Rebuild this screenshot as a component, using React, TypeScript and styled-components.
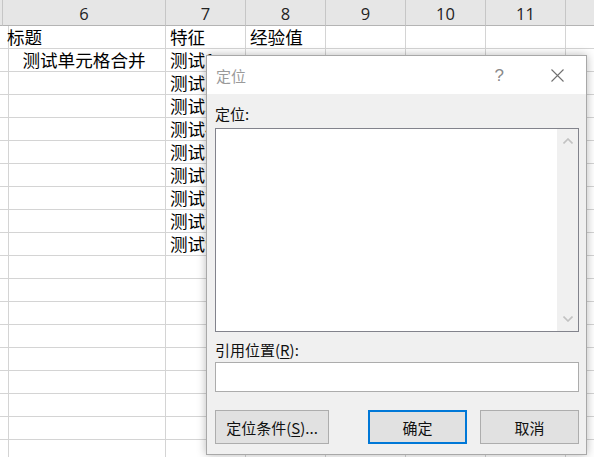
import React from "react";
import styled, { createGlobalStyle } from "styled-components";

const Global = createGlobalStyle`
  html, body { margin: 0; padding: 0; background: #fff; overflow: hidden; }
  body { font-family: "Noto Sans CJK SC", "Noto Sans", sans-serif; }
`;

const Page = styled.div`
  position: relative;
  width: 594px;
  height: 457px;
  overflow: hidden;
  background: #fff;
`;

const Sheet = styled.div`
  display: grid;
  grid-template-columns: 3px 163px 80px 80px 80px 80px 80px 40px;
  grid-auto-rows: 23px;
  grid-template-rows: 26px;
`;

const HeadCell = styled.div`
  box-sizing: border-box;
  background: #e6e6e6;
  border-right: 1px solid #c6c6c6;
  border-bottom: 1px solid #b4b4b4;
  display: flex;
  align-items: center;
  justify-content: center;
  font-family: "Open Sans", "Noto Sans", sans-serif;
  font-size: 16.5px;
  color: #222;
  padding-top: 1px;
`;

const Cell = styled.div<{ $align?: "left" | "center" | "right" }>`
  box-sizing: border-box;
  border-right: 1px solid #d4d4d4;
  border-bottom: 1px solid #d4d4d4;
  display: flex;
  align-items: center;
  justify-content: ${(p) =>
    p.$align === "center" ? "center" : p.$align === "right" ? "flex-end" : "flex-start"};
  padding: 0 4px;
  font-size: 17.6px;
  color: #000;
  white-space: nowrap;
  overflow: visible;
  line-height: 1;
`;

const Dialog = styled.div`
  position: absolute;
  left: 206px;
  top: 55px;
  width: 381px;
  height: 400px;
  box-sizing: border-box;
  border: 1px solid #a8a8a8;
  background: #f0f0f0;
  box-shadow: 0 0 9px rgba(0, 0, 0, 0.28);
  display: flex;
  flex-direction: column;
`;

const TitleBar = styled.div`
  height: 38px;
  background: #fff;
  display: flex;
  align-items: center;
  padding-left: 9px;
  padding-right: 22px;
`;

const Title = styled.div`
  flex: 1;
  font-size: 15px;
  color: #9a9a9a;
  padding-top: 1px;
`;

const Help = styled.div`
  font-family: "Liberation Sans", sans-serif;
  font-size: 17px;
  color: #8a8a8a;
  margin-right: 47px;
  padding-top: 2px;
`;

const Body = styled.div`
  flex: 1;
  display: flex;
  flex-direction: column;
  padding: 10px 7px 0 8px;
`;

const Label = styled.div<{ $mt?: number }>`
  font-size: 15px;
  line-height: 20px;
  height: 20px;
  color: #111;
  margin-top: ${(p) => p.$mt ?? 0}px;
  u { text-decoration: underline; text-underline-offset: 2px; }
`;

const ListBox = styled.div`
  margin-top: 4px;
  height: 204px;
  box-sizing: border-box;
  border: 1px solid #82838c;
  background: #fff;
  display: flex;
`;

const ListArea = styled.div`
  flex: 1;
`;

const ScrollBar = styled.div`
  width: 21px;
  background: #f0f0f0;
  display: flex;
  flex-direction: column;
  justify-content: space-between;
  align-items: center;
  padding: 9px 0 9px;
`;

const Input = styled.div`
  margin-top: 2px;
  height: 30px;
  box-sizing: border-box;
  border: 1px solid #acacac;
  background: #fff;
`;

const ButtonRow = styled.div`
  margin-top: 18px;
  display: flex;
  align-items: center;
  gap: 13px;
`;

const Button = styled.div<{ $w: number; $primary?: boolean; $push?: boolean }>`
  width: ${(p) => p.$w}px;
  height: 34px;
  box-sizing: border-box;
  border: ${(p) => (p.$primary ? "2px solid #0078d7" : "1px solid #adadad")};
  background: #e1e1e1;
  display: flex;
  align-items: center;
  justify-content: center;
  font-size: 15px;
  color: #111;
  margin-left: ${(p) => (p.$push ? "auto" : "0")};
  u { text-decoration: underline; text-underline-offset: 2px; }
`;

const Chevron = ({ up }: { up?: boolean }) => (
  <svg width="10" height="6" viewBox="0 0 10 6">
    <polyline
      points={up ? "0.5,5.5 5,1 9.5,5.5" : "0.5,0.5 5,5 9.5,0.5"}
      fill="none"
      stroke="#c2c2c2"
      strokeWidth="1.6"
    />
  </svg>
);

const CloseIcon = () => (
  <svg width="13" height="13" viewBox="0 0 13 13">
    <path d="M0.5 0.5 L12.5 12.5 M12.5 0.5 L0.5 12.5" stroke="#707070" strokeWidth="1.1" fill="none" />
  </svg>
);

const headers = ["", "6", "7", "8", "9", "10", "11", ""];
const ROWS = 19;

export default function App() {
  const rows: React.ReactNode[] = [];
  for (let r = 0; r < ROWS; r++) {
    for (let c = 0; c < 8; c++) {
      let content: React.ReactNode = null;
      let align: "left" | "center" | "right" = "left";
      if (r === 0 && c === 1) content = "标题";
      if (r === 0 && c === 2) content = "特征";
      if (r === 0 && c === 3) content = "经验值";
      if (r === 1 && c === 1) {
        content = "测试单元格合并";
        align = "center";
      }
      if (r >= 1 && r <= 9 && c === 2) content = `测试${r}`;
      rows.push(
        <Cell key={`${r}-${c}`} $align={align}>
          {content}
        </Cell>
      );
    }
  }

  return (
    <Page>
      <Global />
      <Sheet>
        {headers.map((h, i) => (
          <HeadCell key={i}>{h}</HeadCell>
        ))}
        {rows}
      </Sheet>
      <Dialog>
        <TitleBar>
          <Title>定位</Title>
          <Help>?</Help>
          <CloseIcon />
        </TitleBar>
        <Body>
          <Label>定位:</Label>
          <ListBox>
            <ListArea />
            <ScrollBar>
              <Chevron up />
              <Chevron />
            </ScrollBar>
          </ListBox>
          <Label $mt={8}>
            引用位置(<u>R</u>):
          </Label>
          <Input />
          <ButtonRow>
            <Button $w={114}>
              定位条件(<u>S</u>)...
            </Button>
            <Button $w={99} $primary $push>
              确定
            </Button>
            <Button $w={99}>取消</Button>
          </ButtonRow>
        </Body>
      </Dialog>
    </Page>
  );
}
